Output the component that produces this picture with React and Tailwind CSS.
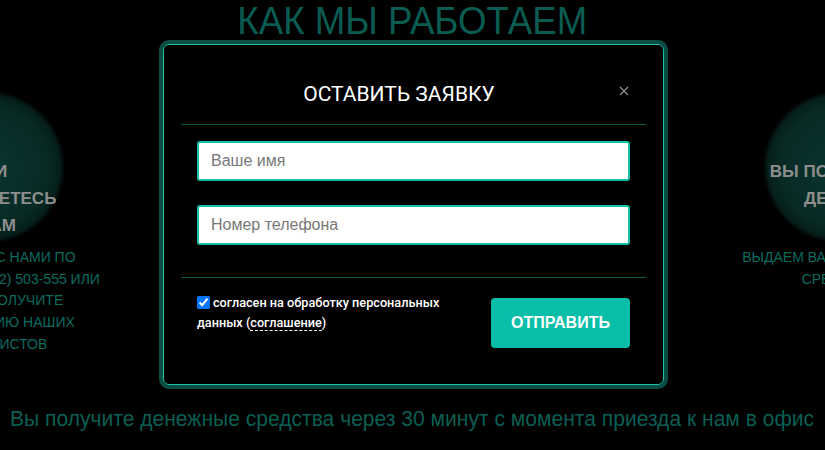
import React from 'react';

const steps = [
  {
    heading: ['ИЛИ', 'ОБРАЩАЕТЕСЬ', 'К НАМ'],
    text: ['СВЯЖИТЕСЬ С НАМИ ПО', 'ТЕЛЕФОНУ +7 (912) 503-555 ИЛИ', 'ЗАЯВКУ И ПОЛУЧИТЕ', 'КОНСУЛЬТАЦИЮ НАШИХ', 'СПЕЦИАЛИСТОВ'],
  },
  {
    heading: ['ПРИЕЗЖАЕТЕ', 'В ОФИС'],
    text: ['ПРИВОЗИТЕ АВТОМОБИЛЬ', 'И ДОКУМЕНТЫ'],
  },
  {
    heading: ['ВЫ ПОЛУЧАЕТЕ', 'ДЕНЬГИ'],
    text: ['ВЫДАЕМ ВАШИ ДЕНЕЖНЫЕ', 'СРЕДСТВА'],
  },
];

function Step({ step }) {
  return (
    <div className="w-[300px] shrink-0 flex flex-col items-center text-center">
      <div className="w-[152px] h-[152px] rounded-full bg-[radial-gradient(circle,#0b3530_0%,#082a25_55%,#061f1b_66%,transparent_71%)] flex flex-col items-center pt-[67px]">
        {step.heading.map((l) => (
          <div key={l} className="text-[17px] leading-[27px] font-bold text-[#8e8e8e] whitespace-nowrap [font-family:'Liberation_Sans',Arial,sans-serif]">
            {l}
          </div>
        ))}
      </div>
      <div className="mt-[4px]">
        {step.text.map((l) => (
          <div key={l} className="text-[14px] leading-[21.7px] text-[#0c6a5f] whitespace-nowrap [font-family:'Liberation_Sans',Arial,sans-serif]">
            {l}
          </div>
        ))}
      </div>
    </div>
  );
}

export default function App() {
  return (
    <div className="relative w-[825px] h-[450px] bg-black overflow-hidden">
      {/* page under the overlay */}
      <div className="flex flex-col items-center">
        <h2 className="pt-[2px] text-[38px] leading-[38px] scale-x-[0.965] text-[#0a5c52] whitespace-nowrap [font-family:'Liberation_Sans',Arial,sans-serif]">
          КАК МЫ РАБОТАЕМ
        </h2>
        <div className="w-full flex justify-center gap-[125px] pl-[3px] mt-[51px]">
          {steps.map((s, i) => (
            <Step key={i} step={s} />
          ))}
        </div>
        <p className="mt-[51px] text-[22px] leading-[24px] scale-x-[0.957] text-[#0b5e53] whitespace-nowrap [font-family:'Liberation_Sans',Arial,sans-serif]">
          Вы получите денежные средства через 30 минут с момента приезда к нам в офис
        </p>
      </div>

      {/* modal */}
      <div className="absolute left-[159px] top-[40px] w-[509px] h-[349px] rounded-[10px] border-4 border-[#0a4d44]">
        <div className="h-full rounded-[6px] border border-[#1fc2a6] bg-black px-[17px]">
          <div className="flex items-start pt-[37px] pb-[18px] border-b border-[#0b5a4f]">
            <div className="flex-1 text-center text-[21px] leading-[24px] text-white [font-family:Roboto,sans-serif]">ОСТАВИТЬ ЗАЯВКУ</div>
            <button className="mt-[4px] mr-[17px] ml-[2px] w-[10px] h-[10px] text-[#8c8c8c]">
              <svg viewBox="0 0 10 10" width="10" height="10" fill="none" stroke="currentColor" strokeWidth="1.2">
                <path d="M1 1L9 9M9 1L1 9" />
              </svg>
            </button>
          </div>

          <div className="px-[16px] pt-[16px] pb-[8px] border-b border-[#0b5a4f] flex flex-col gap-[24px]">
            <input
              type="text"
              placeholder="Ваше имя"
              className="w-full h-[40px] px-[12px] bg-white border-2 border-[#17bfa6] rounded-[3px] text-[16px] text-[#333] placeholder:text-[#777] outline-none [font-family:'Liberation_Sans',Arial,sans-serif]"
            />
            <input
              type="text"
              placeholder="Номер телефона"
              className="w-full h-[40px] mb-[24px] px-[12px] bg-white border-2 border-[#17bfa6] rounded-[3px] text-[16px] text-[#333] placeholder:text-[#777] outline-none [font-family:'Liberation_Sans',Arial,sans-serif]"
            />
          </div>

          <div className="px-[16px] pt-[15px] flex justify-between items-start">
            <label className="w-[252px] text-[12.7px] leading-[20px] font-medium text-white [font-family:Roboto,sans-serif]">
              <input type="checkbox" defaultChecked className="m-0 mr-[3px] w-[13px] h-[13px] align-[-2px]" />
              согласен на обработку персональных данных (<span className="border-b border-dashed border-white">соглашение</span>)
            </label>
            <button className="mt-[5px] w-[139px] h-[50px] rounded-[4px] bg-[#08bea8] text-white text-[16px] font-bold [font-family:'Liberation_Sans',Arial,sans-serif]">
              ОТПРАВИТЬ
            </button>
          </div>
        </div>
      </div>
    </div>
  );
}
